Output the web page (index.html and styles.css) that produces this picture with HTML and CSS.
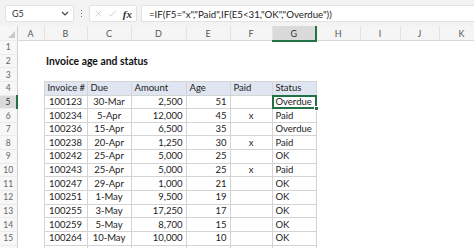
FILE: index.html
```html
<!DOCTYPE html>
<html lang="en">
<head>
    <meta charset="UTF-8">
    <title>Invoice age and status</title>
    <link rel="stylesheet" href="styles.css">
</head>
<body>
    <div class="formula-bar">
        <div class="name-box">
            <span>G5</span>
            <svg class="chevron" width="8" height="5" viewBox="0 0 8 5"><path d="M1 1 L4 4 L7 1" fill="none" stroke="#444" stroke-width="1.2"/></svg>
        </div>
        <div class="grip">
            <i></i><i></i><i></i>
        </div>
        <div class="fx-box">
            <svg width="11" height="11" viewBox="0 0 11 11"><path d="M1 1 L10 10 M10 1 L1 10" stroke="#c4c4c4" stroke-width="1.1"/></svg>
            <svg width="13" height="11" viewBox="0 0 13 11"><path d="M1 6 L4.5 9.5 L12 1" fill="none" stroke="#c4c4c4" stroke-width="1.1"/></svg>
            <span class="fx">fx</span>
        </div>
        <div class="formula">=IF(F5="x","Paid",IF(E5&lt;31,"OK","Overdue"))</div>
    </div>

    <table class="sheet">
        <colgroup>
            <col style="width: 17px">
            <col style="width: 27px">
            <col style="width: 43px">
            <col style="width: 44px">
            <col style="width: 55px">
            <col style="width: 44px">
            <col style="width: 42px">
            <col style="width: 44px">
            <col style="width: 44px">
            <col style="width: 40px">
            <col style="width: 39px">
            <col style="width: 45px">
        </colgroup>
        <tr class="col-heads">
            <th class="corner"><span class="tri"></span></th>
            <th>A</th><th>B</th><th>C</th><th>D</th><th>E</th><th>F</th>
            <th class="active">G</th><th>H</th><th>I</th><th>J</th><th>K</th>
        </tr>
        <tr><th>1</th><td></td><td></td><td></td><td></td><td></td><td></td><td></td><td></td><td></td><td></td><td></td></tr>
        <tr><th>2</th><td></td><td class="title" colspan="4">Invoice age and status</td><td></td><td></td><td></td><td></td><td></td><td></td></tr>
        <tr><th>3</th><td></td><td></td><td></td><td></td><td></td><td></td><td></td><td></td><td></td><td></td><td></td></tr>
        <tr><th>4</th><td></td>
            <td class="c hd">Invoice #</td><td class="c hd">Due</td><td class="c hd">Amount</td><td class="c hd">Age</td><td class="c hd">Paid</td><td class="c hd">Status</td>
            <td></td><td></td><td></td><td></td></tr>
        <tr><th class="active">5</th><td></td>
            <td class="c mid">100123</td><td class="c mid">30-Mar</td><td class="c num">2,500</td><td class="c num">51</td><td class="c mid"></td>
            <td class="c selected">Overdue<span class="sel-frame"></span><span class="handle"></span></td>
            <td></td><td></td><td></td><td></td></tr>
        <tr><th>6</th><td></td>
            <td class="c mid">100234</td><td class="c mid">5-Apr</td><td class="c num">12,000</td><td class="c num">45</td><td class="c mid">x</td><td class="c">Paid</td>
            <td></td><td></td><td></td><td></td></tr>
        <tr><th>7</th><td></td>
            <td class="c mid">100236</td><td class="c mid">15-Apr</td><td class="c num">6,500</td><td class="c num">35</td><td class="c mid"></td><td class="c">Overdue</td>
            <td></td><td></td><td></td><td></td></tr>
        <tr><th>8</th><td></td>
            <td class="c mid">100238</td><td class="c mid">20-Apr</td><td class="c num">1,250</td><td class="c num">30</td><td class="c mid">x</td><td class="c">Paid</td>
            <td></td><td></td><td></td><td></td></tr>
        <tr><th>9</th><td></td>
            <td class="c mid">100242</td><td class="c mid">25-Apr</td><td class="c num">5,000</td><td class="c num">25</td><td class="c mid"></td><td class="c">OK</td>
            <td></td><td></td><td></td><td></td></tr>
        <tr><th>10</th><td></td>
            <td class="c mid">100243</td><td class="c mid">25-Apr</td><td class="c num">5,000</td><td class="c num">25</td><td class="c mid">x</td><td class="c">Paid</td>
            <td></td><td></td><td></td><td></td></tr>
        <tr><th>11</th><td></td>
            <td class="c mid">100247</td><td class="c mid">29-Apr</td><td class="c num">1,000</td><td class="c num">21</td><td class="c mid"></td><td class="c">OK</td>
            <td></td><td></td><td></td><td></td></tr>
        <tr><th>12</th><td></td>
            <td class="c mid">100251</td><td class="c mid">1-May</td><td class="c num">9,500</td><td class="c num">19</td><td class="c mid"></td><td class="c">OK</td>
            <td></td><td></td><td></td><td></td></tr>
        <tr><th>13</th><td></td>
            <td class="c mid">100255</td><td class="c mid">3-May</td><td class="c num">17,250</td><td class="c num">17</td><td class="c mid"></td><td class="c">OK</td>
            <td></td><td></td><td></td><td></td></tr>
        <tr><th>14</th><td></td>
            <td class="c mid">100259</td><td class="c mid">5-May</td><td class="c num">8,700</td><td class="c num">15</td><td class="c mid"></td><td class="c">OK</td>
            <td></td><td></td><td></td><td></td></tr>
        <tr><th>15</th><td></td>
            <td class="c mid">100264</td><td class="c mid">10-May</td><td class="c num">10,000</td><td class="c num">10</td><td class="c mid"></td><td class="c">OK</td>
            <td></td><td></td><td></td><td></td></tr>
        <tr><th></th><td></td>
            <td class="c"></td><td class="c"></td><td class="c"></td><td class="c"></td><td class="c"></td><td class="c"></td>
            <td></td><td></td><td></td><td></td></tr>
    </table>
</body>
</html>
```

FILE: styles.css
```css
* {
    margin: 0;
    padding: 0;
    box-sizing: border-box;
}

body {
    width: 474px;
    height: 248px;
    overflow: hidden;
    background: #ffffff;
    font-family: Lato, "Liberation Sans", sans-serif;
    color: #222;
}

/* formula bar */

.formula-bar {
    display: flex;
    align-items: center;
    height: 26px;
    padding: 5px 0 4px 5px;
    background: #f3f3f3;
}

.name-box {
    display: flex;
    align-items: center;
    justify-content: space-between;
    width: 69px;
    height: 17px;
    padding: 0 4px 0 6px;
    background: #fff;
    border: 1px solid #e2e2e2;
    border-radius: 2px;
    font-size: 9px;
    color: #333;
}

.grip {
    display: flex;
    flex-direction: column;
    gap: 1.5px;
    width: 15px;
    align-items: center;
}

.grip i {
    display: block;
    width: 1.5px;
    height: 1.5px;
    background: #777;
}

.fx-box {
    display: flex;
    align-items: center;
    gap: 6px;
    width: 48px;
    height: 17px;
    padding: 0 4px 0 5px;
    background: #fff;
    border: 1px solid #e2e2e2;
    border-radius: 2px;
}

.fx {
    font-family: "Liberation Serif", serif;
    font-style: italic;
    font-weight: bold;
    font-size: 11px;
    color: #333;
}

.formula {
    flex: 1;
    height: 17px;
    margin-left: 4px;
    padding: 2px 0 0 7px;
    background: #fff;
    border: 1px solid #e2e2e2;
    border-right: none;
    font-size: 9.7px;
    color: #222;
    white-space: nowrap;
}

/* grid */

.sheet {
    table-layout: fixed;
    border-collapse: collapse;
    width: 480px;
    font-size: 9.5px;
}

.sheet tr {
    height: 13.65px;
}

.sheet .col-heads {
    height: 14.5px;
}

.col-heads th {
    background: #f5f5f5;
    font-weight: normal;
    font-size: 9px;
    color: #555;
    text-align: center;
    border-right: 1px solid #e3e3e3;
    border-bottom: 1px solid #d8d8d8;
    padding-top: 1px;
}

.col-heads th.active {
    background: #dadada;
    color: #333;
    border-bottom: 2px solid #217346;
}

.col-heads .corner {
    position: relative;
    border-right: 1px solid #d8d8d8;
}

.tri {
    position: absolute;
    right: 2px;
    bottom: 2px;
    width: 0;
    height: 0;
    border-left: 7px solid transparent;
    border-bottom: 7px solid #c8c8c8;
}

.sheet tr > th:first-child {
    background: #f7f7f7;
    font-weight: normal;
    font-size: 8.5px;
    color: #666;
    text-align: center;
    border-right: 1px solid #d0d0d0;
    border-bottom: 1px solid #ececec;
}

.sheet tr > th.active {
    background: #dadada;
    color: #333;
    border-right: 2px solid #217346;
}

.sheet td {
    padding: 0 3px;
    white-space: nowrap;
    overflow: visible;
    line-height: 12px;
}

.title {
    font-weight: bold;
    font-size: 10.4px;
    color: #111;
    padding-left: 2px !important;
}

.c {
    border: 1px solid #d4d4d4;
}

.hd {
    background: #dfe6f1;
    text-align: left;
}

.mid {
    text-align: center;
}

.num {
    text-align: right;
}

.selected {
    position: relative;
}

.sel-frame {
    position: absolute;
    left: -1px;
    top: -1px;
    right: -1px;
    bottom: -1px;
    border: 2px solid #217346;
}

.handle {
    position: absolute;
    right: -3px;
    bottom: -3px;
    width: 5px;
    height: 5px;
    background: #217346;
    border: 1px solid #fff;
}
```
